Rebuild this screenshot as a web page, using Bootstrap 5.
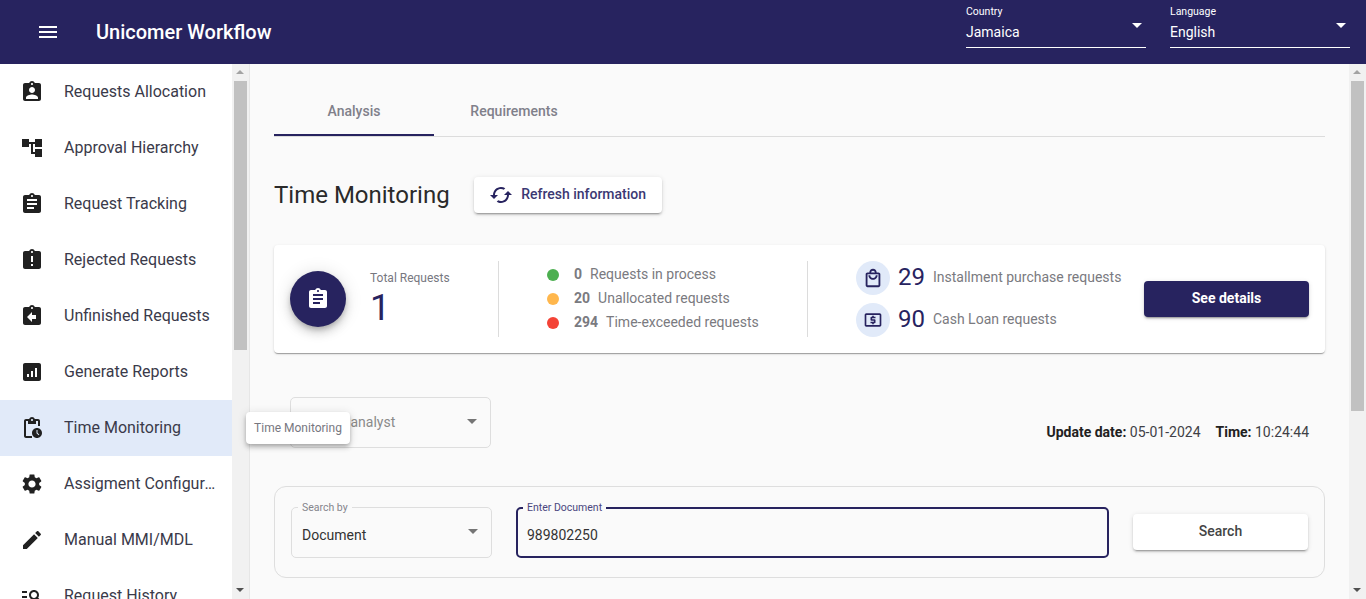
<!DOCTYPE html>
<html lang="en">

<head>
    <meta charset="UTF-8">
    <meta name="viewport" content="width=device-width, initial-scale=1.0">
    <title>Unicomer Workflow</title>
    <link href="https://cdn.jsdelivr.net/npm/bootstrap@5.3.0/dist/css/bootstrap.min.css" rel="stylesheet">
    <style>
        html, body {
            height: 100%;
            overflow: hidden;
        }

        body {
            font-family: Roboto, "Liberation Sans", sans-serif;
            font-size: 14px;
            background: #fafafa;
            color: #212121;
        }

        /* header */
        .top-bar {
            height: 64px;
            background: #27235f;
            color: #fff;
            flex-shrink: 0;
        }

        .burger {
            margin-left: 36px;
            margin-right: 36px;
            fill: #fff;
        }

        .app-title {
            font-size: 20px;
            font-weight: 500;
            margin: 0;
        }

        .head-select {
            width: 180px;
            height: 48px;
            margin-left: 24px;
            border-bottom: 1px solid #fff;
            position: relative;
        }

        .head-select small {
            display: block;
            font-size: 10.5px;
            line-height: 12px;
            padding-top: 6px;
        }

        .head-select span {
            display: block;
            font-size: 14px;
            line-height: 16px;
            padding-top: 6px;
        }

        .caret {
            position: absolute;
            width: 0;
            height: 0;
            border-left: 5px solid transparent;
            border-right: 5px solid transparent;
            border-top: 5px solid #fff;
            right: 4px;
            top: 23px;
        }

        /* sidebar */
        .app-body {
            height: 535px;
        }

        .side-wrap {
            width: 250px;
            flex-shrink: 0;
            border-right: 1px solid #e6e6e6;
        }

        .side-list {
            width: 232px;
            background: #fff;
            overflow: hidden;
        }

        .side-item {
            height: 56px;
            flex-shrink: 0;
            padding-left: 20px;
            color: #3a3a4a;
            font-size: 16px;
            text-decoration: none;
        }

        .side-item svg {
            width: 24px;
            height: 24px;
            fill: #212121;
            flex-shrink: 0;
            margin-right: 20px;
            margin-top: -1px;
        }

        .side-item span {
            width: 152px;
            white-space: nowrap;
            overflow: hidden;
            text-overflow: ellipsis;
            margin-top: -1px;
        }

        .side-item.is-active {
            background: #e1eaf9;
        }

        /* scrollbars */
        .fake-scroll {
            width: 17px;
            background: #f1f1f1;
            flex-shrink: 0;
        }

        .fake-scroll i {
            display: block;
            height: 17px;
            flex-shrink: 0;
            position: relative;
        }

        .fake-scroll i::after {
            content: "";
            position: absolute;
            left: 4px;
            top: 6px;
            border-left: 4px solid transparent;
            border-right: 4px solid transparent;
        }

        .fake-scroll .up::after {
            border-bottom: 4px solid #a3a3a3;
        }

        .fake-scroll .down::after {
            border-top: 4px solid #505050;
        }

        .fake-scroll b {
            display: block;
            margin: 0 2px;
            background: #c1c1c1;
        }

        .thumb-side {
            height: 269px;
        }

        .thumb-main {
            height: 330px;
        }

        /* main */
        .main-area {
            min-width: 0;
            padding: 24px 24px 0;
            overflow: hidden;
        }

        .tab-row {
            border-bottom: 1px solid #dcdcdc;
            height: 49px;
        }

        .tab-btn {
            width: 160px;
            height: 48px;
            line-height: 46px;
            text-align: center;
            color: #80808a;
            font-size: 14px;
            font-weight: 500;
        }

        .tab-btn.is-on {
            border-bottom: 2px solid #27235f;
        }

        .page-head {
            margin-top: 40px;
            gap: 24px;
        }

        .page-head h2 {
            font-size: 24px;
            font-weight: 400;
            margin: 0;
            color: #2a2a2a;
        }

        .btn-refresh {
            height: 36px;
            width: 188px;
            padding: 0 0 2px;
            background: #fff;
            color: #3b3873;
            font-size: 14px;
            font-weight: 500;
            border: 0;
            border-radius: 4px;
            box-shadow: 0 3px 1px -2px rgba(0,0,0,.2), 0 2px 2px 0 rgba(0,0,0,.14), 0 1px 5px 0 rgba(0,0,0,.12);
        }

        .btn-refresh svg {
            width: 24px;
            height: 24px;
            fill: #27235f;
            margin-right: 8px;
            margin-top: 2px;
        }

        .sum-card {
            margin-top: 32px;
            height: 108px;
            padding: 16px;
            border: 0;
            border-radius: 4px;
            box-shadow: 0 2px 1px -1px rgba(0,0,0,.2), 0 1px 1px 0 rgba(0,0,0,.14), 0 1px 3px 0 rgba(0,0,0,.12);
        }

        .total-part {
            width: 209px;
            border-right: 1px solid #dcdcdc;
        }

        .total-ico {
            width: 56px;
            height: 56px;
            border-radius: 50%;
            background: #27235f;
            margin-right: 24px;
            box-shadow: 0 3px 5px -1px rgba(0,0,0,.2), 0 6px 10px 0 rgba(0,0,0,.14), 0 1px 18px 0 rgba(0,0,0,.12);
        }

        .total-ico svg {
            width: 24px;
            height: 24px;
            fill: #fff;
        }

        .total-label {
            font-size: 12px;
            line-height: 14px;
            color: #77777f;
            margin-top: 1px;
            margin-bottom: 3px;
        }

        .total-num {
            font-size: 36px;
            line-height: 40px;
            font-weight: 400;
            color: #27235f;
        }

        .state-part {
            width: 309px;
            padding-left: 48px;
            padding-bottom: 2px;
            border-right: 1px solid #dcdcdc;
            color: #7a7a80;
        }

        .state-line {
            height: 24px;
            white-space: nowrap;
        }

        .state-line u {
            display: block;
            width: 12px;
            height: 12px;
            border-radius: 50%;
            margin-right: 15px;
            margin-top: 2px;
            flex-shrink: 0;
        }

        .state-line strong {
            font-weight: 700;
            margin-right: 8px;
        }

        .dot-green { background: #4caf50; }
        .dot-orange { background: #ffb74d; }
        .dot-red { background: #f44336; }

        .type-part {
            padding-left: 48px;
            gap: 8px;
            color: #7a7a80;
        }

        .type-line {
            height: 34px;
            white-space: nowrap;
        }

        .type-text {
            margin-top: -2px;
        }

        .type-ico {
            width: 34px;
            height: 34px;
            border-radius: 50%;
            background: #e1eaf9;
            margin-right: 8px;
        }

        .type-ico svg {
            width: 20px;
            height: 20px;
            fill: #27235f;
        }

        .type-ico svg.bag-ico {
            width: 22px;
            height: 22px;
        }

        .type-num {
            font-size: 24px;
            font-weight: 400;
            color: #27235f;
            margin-right: 8px;
        }

        .btn-details {
            width: 165px;
            height: 36px;
            padding: 0 0 2px;
            background: #27235f;
            color: #fff;
            font-size: 14px;
            font-weight: 700;
            border: 0;
            border-radius: 4px;
            box-shadow: 0 3px 1px -2px rgba(0,0,0,.2), 0 2px 2px 0 rgba(0,0,0,.14), 0 1px 5px 0 rgba(0,0,0,.12);
        }

        .filter-row {
            margin-top: 44px;
            padding: 0 16px;
        }

        .outline-box {
            position: relative;
            height: 51px;
            width: 201px;
            border: 1px solid #dedede;
            border-radius: 5px;
            padding: 0 10px;
            line-height: 49px;
            flex-shrink: 0;
        }

        .outline-box .caret {
            border-top-color: #757575;
            right: 13px;
            top: 21px;
        }

        .muted-value {
            color: #8a8a8a;
            margin-left: 3px;
        }

        .update-info {
            font-size: 14px;
            margin-top: 25px;
            color: #3f3f46;
        }

        .update-info strong {
            color: #212121;
            font-weight: 700;
        }

        .time-part {
            margin-left: 15px;
        }

        .search-panel {
            margin-top: 38px;
            height: 92px;
            padding: 20px 16px;
            border: 1px solid #dedede;
            border-radius: 12px;
            gap: 24px;
        }

        .float-label {
            position: absolute;
            left: 6px;
            top: -6px;
            font-size: 10.5px;
            line-height: 12px;
            padding: 0 4px;
            background: #fafafa;
            color: #85858c;
        }

        .box-value {
            padding-top: 5px;
            line-height: 44px;
            color: #333;
        }

        .doc-box {
            flex: 1 1 auto;
            width: auto;
            border: 2px solid #27235f;
            padding: 0 9px;
            line-height: 47px;
        }

        .doc-box .box-value {
            padding-top: 5px;
            line-height: 42px;
        }

        .doc-box .float-label {
            left: 5px;
            top: -7px;
            color: #4a4780;
        }

        .btn-search {
            width: 175px;
            height: 36px;
            padding: 0 0 2px;
            background: #fff;
            color: #444;
            font-size: 14px;
            font-weight: 500;
            border: 0;
            border-radius: 4px;
            flex-shrink: 0;
            box-shadow: 0 3px 1px -2px rgba(0,0,0,.2), 0 2px 2px 0 rgba(0,0,0,.14), 0 1px 5px 0 rgba(0,0,0,.12);
        }

        .hover-tip {
            position: absolute;
            left: 246px;
            top: 412px;
            width: 104px;
            height: 32px;
            line-height: 32px;
            text-align: center;
            font-size: 12px;
            color: #77777f;
            background: #fff;
            border-radius: 4px;
            z-index: 10;
            box-shadow: 0 2px 4px -1px rgba(0,0,0,.2), 0 4px 5px 0 rgba(0,0,0,.14), 0 1px 10px 0 rgba(0,0,0,.12);
        }
    </style>
</head>

<body class="d-flex flex-column">
    <svg width="0" height="0" class="position-absolute">
        <symbol id="i-assignment" viewBox="0 0 24 24"><path d="M19 3h-4.18C14.4 1.84 13.3 1 12 1c-1.3 0-2.4.84-2.82 2H5c-1.1 0-2 .9-2 2v14c0 1.1.9 2 2 2h14c1.1 0 2-.9 2-2V5c0-1.1-.9-2-2-2zm-7 0c.55 0 1 .45 1 1s-.45 1-1 1-1-.45-1-1 .45-1 1-1zm2 14H7v-2h7v2zm3-4H7v-2h10v2zm0-4H7V7h10v2z"/></symbol>
    </svg>

    <!-- Header -->
    <header class="top-bar d-flex align-items-center">
        <svg class="burger" width="24" height="24" viewBox="0 0 24 24"><path d="M3 18h18v-2H3v2zm0-5h18v-2H3v2zm0-7v2h18V6H3z"/></svg>
        <h1 class="app-title">Unicomer Workflow</h1>
        <div class="d-flex ms-auto me-3 align-self-start">
            <div class="head-select"><small>Country</small><span>Jamaica</span><div class="caret"></div></div>
            <div class="head-select"><small>Language</small><span>English</span><div class="caret"></div></div>
        </div>
    </header>

    <div class="app-body d-flex">
        <!-- Sidebar -->
        <div class="side-wrap d-flex">
            <nav class="side-list d-flex flex-column">
                <a href="#" class="side-item d-flex align-items-center"><svg viewBox="0 0 24 24"><path d="M19 3h-4.18C14.4 1.84 13.3 1 12 1c-1.3 0-2.4.84-2.82 2H5c-1.1 0-2 .9-2 2v14c0 1.1.9 2 2 2h14c1.1 0 2-.9 2-2V5c0-1.1-.9-2-2-2zm-7 0c.55 0 1 .45 1 1s-.45 1-1 1-1-.45-1-1 .45-1 1-1zm0 4c1.66 0 3 1.34 3 3s-1.34 3-3 3-3-1.34-3-3 1.34-3 3-3zm6 12H6v-1.4c0-2 4-3.1 6-3.1s6 1.1 6 3.1V19z"/></svg><span>Requests Allocation</span></a>
                <a href="#" class="side-item d-flex align-items-center"><svg viewBox="0 0 24 24"><path d="M22 11V3h-7v3H9V3H2v8h7V8h2v10h4v3h7v-8h-7v3h-2V8h2v3z"/></svg><span>Approval Hierarchy</span></a>
                <a href="#" class="side-item d-flex align-items-center"><svg><use href="#i-assignment"/></svg><span>Request Tracking</span></a>
                <a href="#" class="side-item d-flex align-items-center"><svg viewBox="0 0 24 24"><path d="M19 3h-4.18C14.4 1.84 13.3 1 12 1c-1.3 0-2.4.84-2.82 2H5c-1.1 0-2 .9-2 2v14c0 1.1.9 2 2 2h14c1.1 0 2-.9 2-2V5c0-1.1-.9-2-2-2zm-6 15h-2v-2h2v2zm0-4h-2V8h2v6zm-1-9c-.55 0-1-.45-1-1s.45-1 1-1 1 .45 1 1-.45 1-1 1z"/></svg><span>Rejected Requests</span></a>
                <a href="#" class="side-item d-flex align-items-center"><svg viewBox="0 0 24 24"><path d="M19 3h-4.18C14.4 1.84 13.3 1 12 1c-1.3 0-2.4.84-2.82 2H5c-1.1 0-2 .9-2 2v14c0 1.1.9 2 2 2h14c1.1 0 2-.9 2-2V5c0-1.1-.9-2-2-2zm-7 0c.55 0 1 .45 1 1s-.45 1-1 1-1-.45-1-1 .45-1 1-1zm4 12h-4v3l-5-5 5-5v3h4v4z"/></svg><span>Unfinished Requests</span></a>
                <a href="#" class="side-item d-flex align-items-center"><svg viewBox="0 0 24 24"><path fill-rule="evenodd" d="M19 3H5c-1.1 0-2 .9-2 2v14c0 1.1.9 2 2 2h14c1.1 0 2-.9 2-2V5c0-1.1-.9-2-2-2zM9 17H7v-3h2v3zm4 0h-2v-6h2v6zm4 0h-2V8h2v9z"/></svg><span>Generate Reports</span></a>
                <a href="#" class="side-item is-active d-flex align-items-center"><svg viewBox="0 0 24 24"><path d="M17 12c-2.76 0-5 2.24-5 5s2.24 5 5 5 5-2.24 5-5-2.24-5-5-5zm1.65 7.35L16.5 17.2V14h1v2.79l1.85 1.85-.7.71zM18 3h-3.18C14.4 1.84 13.3 1 12 1s-2.4.84-2.82 2H6c-1.1 0-2 .9-2 2v15c0 1.1.9 2 2 2h6v-2H6V5h2v3h8V5h2v5h2V5c0-1.1-.9-2-2-2zm-6 2c-.55 0-1-.45-1-1s.45-1 1-1 1 .45 1 1-.45 1-1 1z"/></svg><span>Time Monitoring</span></a>
                <a href="#" class="side-item d-flex align-items-center"><svg viewBox="0 0 24 24"><path d="M19.14 12.94c.04-.3.06-.61.06-.94 0-.32-.02-.64-.07-.94l2.03-1.58c.18-.14.23-.41.12-.61l-1.92-3.32c-.12-.22-.37-.29-.59-.22l-2.39.96c-.5-.38-1.03-.7-1.62-.94l-.36-2.54c-.04-.24-.24-.41-.48-.41h-3.84c-.24 0-.43.17-.47.41l-.36 2.54c-.59.24-1.13.57-1.62.94l-2.39-.96c-.22-.08-.47 0-.59.22L2.74 8.87c-.12.21-.08.47.12.61l2.03 1.58c-.05.3-.09.63-.09.94s.02.64.07.94l-2.03 1.58c-.18.14-.23.41-.12.61l1.92 3.32c.12.22.37.29.59.22l2.39-.96c.5.38 1.03.7 1.62.94l.36 2.54c.05.24.24.41.48.41h3.84c.24 0 .44-.17.47-.41l.36-2.54c.59-.24 1.13-.56 1.62-.94l2.39.96c.22.08.47 0 .59-.22l1.92-3.32c.12-.22.07-.47-.12-.61l-2.01-1.58zM12 15.6c-1.98 0-3.6-1.62-3.6-3.6s1.62-3.6 3.6-3.6 3.6 1.62 3.6 3.6-1.62 3.6-3.6 3.6z"/></svg><span>Assigment Configuration</span></a>
                <a href="#" class="side-item d-flex align-items-center"><svg viewBox="0 0 24 24"><path d="M3 17.25V21h3.75L17.81 9.94l-3.75-3.75L3 17.25zM20.71 7.04c.39-.39.39-1.02 0-1.41l-2.34-2.34c-.39-.39-1.02-.39-1.41 0l-1.83 1.83 3.75 3.75 1.83-1.83z"/></svg><span>Manual MMI/MDL</span></a>
                <a href="#" class="side-item d-flex align-items-center"><svg viewBox="0 0 24 24"><path d="M7 9H2V7h5v2zm0 3H2v2h5v-2zm13.59 7l-3.83-3.83c-.8.52-1.74.83-2.76.83-2.76 0-5-2.24-5-5s2.24-5 5-5 5 2.24 5 5c0 1.02-.31 1.96-.83 2.75L22 17.59 20.59 19zM17 11c0-1.65-1.35-3-3-3s-3 1.35-3 3 1.35 3 3 3 3-1.35 3-3zM2 19h10v-2H2v2z"/></svg><span>Request History</span></a>
            </nav>
            <div class="fake-scroll d-flex flex-column">
                <i class="up"></i>
                <b class="thumb-side"></b>
                <i class="down mt-auto"></i>
            </div>
        </div>

        <!-- Main -->
        <main class="main-area flex-grow-1">
            <div class="tab-row d-flex">
                <div class="tab-btn is-on">Analysis</div>
                <div class="tab-btn">Requirements</div>
            </div>

            <div class="page-head d-flex align-items-center">
                <h2>Time Monitoring</h2>
                <button type="button" class="btn btn-refresh d-flex align-items-center justify-content-center">
                    <svg viewBox="0 0 24 24"><path d="M19 8l-4 4h3c0 3.31-2.69 6-6 6-1.01 0-1.97-.25-2.8-.7l-1.46 1.46C8.97 19.54 10.43 20 12 20c4.42 0 8-3.58 8-8h3l-4-4zM6 12c0-3.31 2.69-6 6-6 1.01 0 1.97.25 2.8.7l1.46-1.46C15.03 4.46 13.57 4 12 4c-4.42 0-8 3.58-8 8H1l4 4 4-4H6z"/></svg>
                    Refresh information
                </button>
            </div>

            <div class="card sum-card flex-row">
                <div class="total-part d-flex align-items-center">
                    <div class="total-ico d-flex align-items-center justify-content-center"><svg><use href="#i-assignment"/></svg></div>
                    <div>
                        <div class="total-label">Total Requests</div>
                        <div class="total-num">1</div>
                    </div>
                </div>
                <div class="state-part d-flex flex-column justify-content-center">
                    <div class="state-line d-flex align-items-center"><u class="dot-green"></u><strong>0</strong>Requests in process</div>
                    <div class="state-line d-flex align-items-center"><u class="dot-orange"></u><strong>20</strong>Unallocated requests</div>
                    <div class="state-line d-flex align-items-center"><u class="dot-red"></u><strong>294</strong>Time-exceeded requests</div>
                </div>
                <div class="type-part d-flex flex-column justify-content-center">
                    <div class="type-line d-flex align-items-center">
                        <div class="type-ico d-flex align-items-center justify-content-center"><svg class="bag-ico" viewBox="0 0 24 24"><path d="M18 6h-2c0-2.21-1.79-4-4-4S8 3.79 8 6H6c-1.1 0-2 .9-2 2v12c0 1.1.9 2 2 2h12c1.1 0 2-.9 2-2V8c0-1.1-.9-2-2-2zm-6-2c1.1 0 2 .9 2 2h-4c0-1.1.9-2 2-2zm6 16H6V8h12v12zm-6-8c-1.66 0-3-1.34-3-3H7c0 2.76 2.24 5 5 5s5-2.24 5-5h-2c0 1.66-1.34 3-3 3z"/></svg></div>
                        <span class="type-num type-text">29</span><span class="type-text">Installment purchase requests</span>
                    </div>
                    <div class="type-line d-flex align-items-center">
                        <div class="type-ico d-flex align-items-center justify-content-center"><svg viewBox="0 0 24 24"><path d="M11 17h2v-1h1c.55 0 1-.45 1-1v-3c0-.55-.45-1-1-1h-3v-1h4V8h-2V7h-2v1h-1c-.55 0-1 .45-1 1v3c0 .55.45 1 1 1h3v1H9v2h2v1zm9-13H4c-1.11 0-1.99.89-1.99 2L2 18c0 1.11.89 2 2 2h16c1.11 0 2-.89 2-2V6c0-1.11-.89-2-2-2zm0 14H4V6h16v12z"/></svg></div>
                        <span class="type-num type-text">90</span><span class="type-text">Cash Loan requests</span>
                    </div>
                </div>
                <button type="button" class="btn btn-details ms-auto align-self-center">See details</button>
            </div>

            <div class="filter-row d-flex justify-content-between align-items-start">
                <div class="outline-box"><span class="muted-value">Search analyst</span><div class="caret"></div></div>
                <div class="update-info"><strong>Update date:</strong> 05-01-2024<strong class="time-part">Time:</strong> 10:24:44</div>
            </div>

            <div class="search-panel d-flex align-items-center">
                <div class="outline-box">
                    <div class="float-label">Search by</div>
                    <div class="box-value">Document</div>
                    <div class="caret"></div>
                </div>
                <div class="outline-box doc-box">
                    <div class="float-label">Enter Document</div>
                    <div class="box-value">989802250</div>
                </div>
                <button type="button" class="btn btn-search">Search</button>
            </div>
        </main>

        <div class="fake-scroll d-flex flex-column">
            <i class="up"></i>
            <b class="thumb-main"></b>
            <i class="down mt-auto"></i>
        </div>
    </div>

    <div class="hover-tip">Time Monitoring</div>

    <script src="https://cdn.jsdelivr.net/npm/bootstrap@5.3.0/dist/js/bootstrap.bundle.min.js"></script>
</body>

</html>
